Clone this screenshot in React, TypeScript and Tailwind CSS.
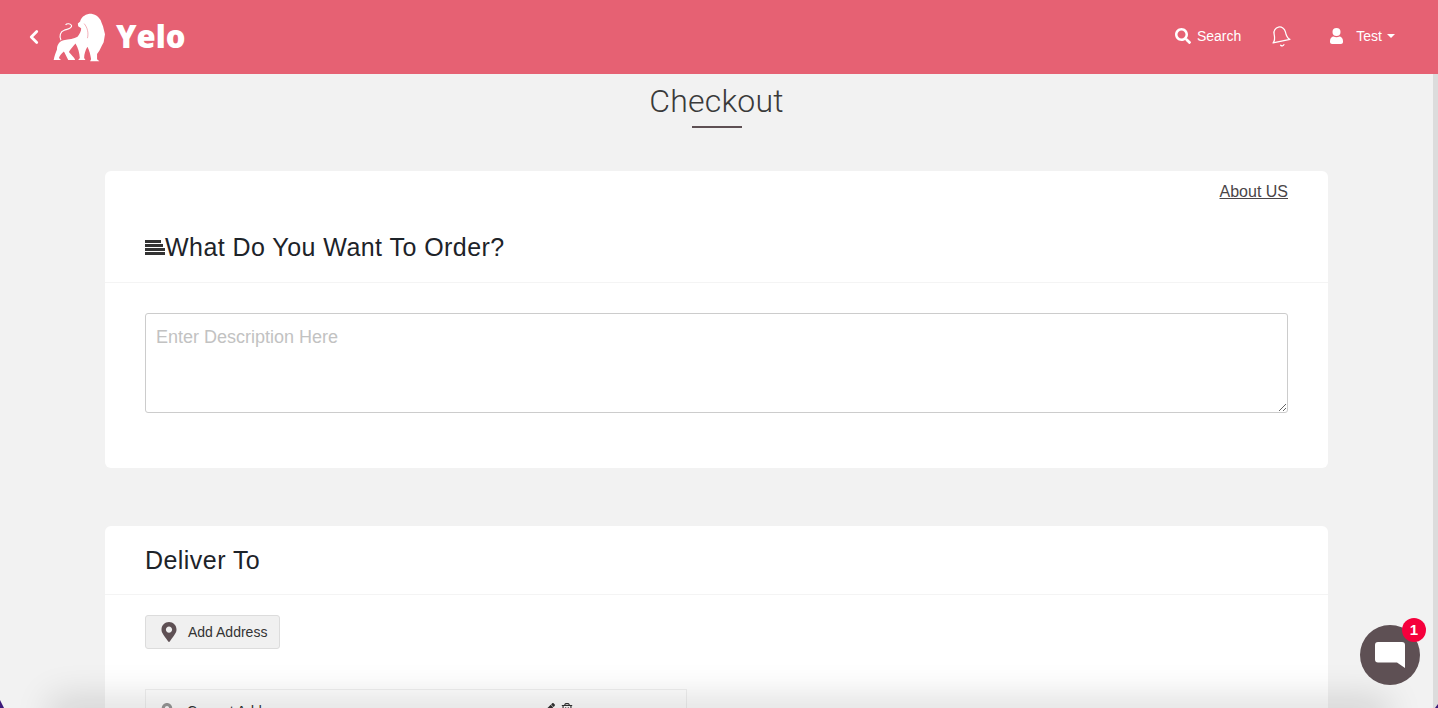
import { ChevronLeft } from "lucide-react";
import { FaSearch, FaMapMarkerAlt, FaPen, FaRegTrashAlt } from "react-icons/fa";
import { FiBell } from "react-icons/fi";

function LionLogo() {
  return (
    <svg className="h-[49px] w-[53px] shrink-0" viewBox="158 36 160 148" fill="white" aria-hidden>
      <path d="M233 68 L240 62 C242 50 252 41 268 38 C284 38 296 46 302 58 L305 66 L309 76 L312 88 L315 100 L313 112 L311 124 L305 136 L298 150 L291 160 L291 176 L298 182 L270 182 L273 176 C271 162 268 150 262 138 C256 148 252 160 252 172 L256 178 L234 178 L239 172 C238 156 234 142 226 128 C218 138 210 146 206 154 L222 172 L225 178 L204 178 L191 152 C184 158 177 165 176 172 L182 178 L160 178 C162 166 166 156 170 146 C170 132 176 122 190 118 C206 116 222 114 232 108 C238 100 244 90 243 82 L234 76 Z" />
      <path d="M182 118 C176 106 180 92 192 88 C204 84 216 82 214 74 C212 68 200 66 196 72" fill="none" stroke="white" strokeWidth="3.5" />
      <path d="M252 68 C262 80 266 96 262 112" fill="none" stroke="#e66173" strokeWidth="1.5" />
    </svg>
  );
}

function UserIcon() {
  return (
    <svg className="h-[16px] w-[13px]" viewBox="0 0 13 16" fill="white" aria-hidden>
      <circle cx="6.5" cy="4" r="4" />
      <path d="M0 13 C0 10 2 8.5 3.5 8.5 C5 9.6 8 9.6 9.5 8.5 C11 8.5 13 10 13 13 V14 C13 15 12 16 11 16 H2 C1 16 0 15 0 14 Z" />
    </svg>
  );
}

function ChatBubble() {
  return (
    <svg className="h-[26px] w-[30px]" viewBox="0 0 30 26" fill="white" aria-hidden>
      <path d="M3 0 H27 C29 0 30 1 30 3 V26 L22 20.5 H3 C1 20.5 0 19.5 0 17.5 V3 C0 1 1 0 3 0 Z" />
    </svg>
  );
}

export default function App() {
  return (
    <div className="relative flex h-[708px] flex-col overflow-hidden bg-[#f2f2f2] font-['Liberation_Sans',Arial,sans-serif] text-[#212529]">
      <header className="flex h-[74px] shrink-0 items-center bg-[#e66173] pl-[23px] pr-[43px] text-white">
        <ChevronLeft className="mr-[8px] h-[22px] w-[22px]" strokeWidth={3} />
        <LionLogo />
        <span className="ml-[10px] pb-[2px] font-['Open_Sans',sans-serif] text-[31px] font-extrabold leading-none">Yelo</span>
        <div className="ml-auto flex items-center pb-[2px] text-[14px]">
          <FaSearch className="h-[16px] w-[16px]" />
          <span className="ml-[6px]">Search</span>
          <FiBell className="ml-[28px] h-[23px] w-[23px] -rotate-12" strokeWidth={1.3} />
          <span className="ml-[38px]">
            <UserIcon />
          </span>
          <span className="ml-[13px]">Test</span>
          <span className="ml-[5px] h-0 w-0 border-x-[4px] border-t-[4px] border-x-transparent border-t-white" />
        </div>
      </header>

      <div className="flex min-h-0 flex-1">
        <main className="min-w-0 flex-1 overflow-hidden">
          <div className="flex flex-col items-center">
            <h1 className="mt-[9px] font-['Roboto',sans-serif] text-[32px] font-light leading-[36px] tracking-[0.2px] text-[#3a3a3a]">Checkout</h1>
            <span className="mt-[7px] h-[2px] w-[50px] bg-[#5e5054]" />
          </div>

          <div className="mx-[105px] mt-[43px] flex flex-col gap-[58px]">
            <section className="h-[297px] rounded-[6px] bg-white">
              <div className="flex justify-end px-[40px] pt-[11px]">
                <a className="text-[16px] leading-[20px] text-[#4a4548] underline">About US</a>
              </div>
              <div className="mt-[20px] h-[61px] border-b border-[#f4f4f4] px-[40px] pt-[11px]">
                <div className="flex items-center">
                  <span className="flex w-[20px] flex-col gap-[1px]">
                    <span className="h-[3px] w-[16px] bg-[#333]" />
                    <span className="h-[3px] w-[18px] bg-[#333]" />
                    <span className="h-[3px] w-[20px] bg-[#333]" />
                    <span className="h-[3px] w-[20px] bg-[#333]" />
                  </span>
                  <h2 className="text-[25px] leading-[28px] tracking-[0.45px] text-[#1d2329]">What Do You Want To Order?</h2>
                </div>
              </div>
              <div className="px-[40px] pt-[30px]">
                <textarea
                  placeholder="Enter Description Here"
                  className="block h-[100px] w-full rounded-[3px] border border-[#cccccc] bg-white px-[10px] py-[11px] text-[18px] leading-[25px] outline-none placeholder:text-[#c2c2c2]"
                />
              </div>
            </section>

            <section className="rounded-[6px] bg-white">
              <div className="flex h-[69px] items-center border-b border-[#f4f4f4] px-[40px]">
                <h2 className="text-[25px] leading-[28px] tracking-[0.45px] text-[#1d2329]">Deliver To</h2>
              </div>
              <div className="px-[40px] pt-[20px]">
                <button
                  type="button"
                  className="flex h-[34px] w-[135px] items-center rounded-[3px] border border-[#dcdcdc] bg-[#f0f0f0] pl-[13px] text-[14px] text-[#333]"
                >
                  <FaMapMarkerAlt className="h-[20px] w-[20px] text-[#5e5054]" />
                  <span className="ml-[9px]">Add Address</span>
                </button>
                <div className="mt-[40px] flex h-[60px] w-[542px] items-start border border-[#f0f0f0] pl-[14px] pt-[11px] text-[14px] text-[#333]">
                  <FaMapMarkerAlt className="mt-[2px] h-[14px] w-[14px] text-[#999]" />
                  <span className="ml-[13px]">Current Address</span>
                  <FaPen className="ml-auto mt-[2px] h-[10px] w-[10px] text-[#333]" />
                  <FaRegTrashAlt className="ml-[6px] mr-[113px] mt-[2px] h-[12px] w-[12px] text-[#333]" />
                </div>
              </div>
            </section>
          </div>
        </main>
        <div className="w-[5px] shrink-0 bg-[#dcdcdc]" />
      </div>

      {/* dock shadow coming up from below the window */}
      <div className="pointer-events-none absolute inset-x-[60px] bottom-[-14px] h-[14px] shadow-[0_0_36px_10px_rgba(0,0,0,0.14)]" />

      <div className="absolute bottom-[23px] right-[18px] flex h-[60px] w-[60px] items-center justify-center rounded-full bg-[#5e5054]">
        <ChatBubble />
        <span className="absolute right-[-6px] top-[-7px] flex h-[24px] w-[24px] items-center justify-center rounded-full bg-[#f5003c] text-[15px] font-bold text-white">
          1
        </span>
      </div>

      {/* window corners showing the wallpaper */}
      <svg className="absolute bottom-0 left-0 h-[8px] w-[4px]" viewBox="0 0 4 8" fill="#3d1a7a" aria-hidden>
        <path d="M0 0 L4 8 H0 Z" />
      </svg>
      <svg className="absolute bottom-0 right-0 h-[4px] w-[3px]" viewBox="0 0 3 4" fill="#3d1a7a" aria-hidden>
        <path d="M3 0 V4 H0 Z" />
      </svg>
    </div>
  );
}
